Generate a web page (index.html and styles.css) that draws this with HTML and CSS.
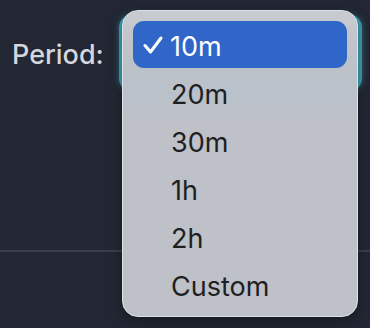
FILE: index.html
```html
<!DOCTYPE html>
<html>
<head>
<meta charset="utf-8">
<link rel="stylesheet" href="styles.css">
</head>
<body>
<div class="page">
  <div class="field">
    <span class="label">Period:</span>
    <div class="select">
      <ul class="menu">
        <li class="item selected"><svg class="check" width="20" height="18" viewBox="0 0 20 18"><polyline points="2,9.5 7.5,16 18,2" fill="none" stroke="#fff" stroke-width="3" stroke-linecap="round" stroke-linejoin="round"/></svg><span>10m</span></li>
        <li class="item"><span>20m</span></li>
        <li class="item"><span>30m</span></li>
        <li class="item"><span>1h</span></li>
        <li class="item"><span>2h</span></li>
        <li class="item"><span>Custom</span></li>
      </ul>
    </div>
  </div>
  <div class="divider"></div>
</div>
</body>
</html>
```

FILE: styles.css
```css
html, body {
  margin: 0;
  padding: 0;
  background: #222733;
}
.page {
  width: 370px;
  height: 328px;
  overflow: hidden;
  font-family: Inter, "Liberation Sans", sans-serif;
}
.field {
  display: flex;
  align-items: flex-start;
  padding: 14px 0 0 12px;
}
.label {
  width: 107px;
  margin-top: 26px;
  font-size: 27px;
  line-height: 30px;
  font-weight: 500;
  color: #d5d7dc;
}
.select {
  position: relative;
  width: 243px;
  height: 78px;
  border-radius: 14px;
  background: #3f9fb2;
  box-shadow: 0 0 6px rgba(80, 180, 200, 0.5);
}
.menu {
  position: absolute;
  left: 3px;
  top: -4px;
  width: 236px;
  height: 307px;
  box-sizing: border-box;
  margin: 0;
  padding: 10px 10px 0 10px;
  list-style: none;
  border-radius: 16px;
  background: linear-gradient(180deg, #c8cbd0 0px, #bfc2c8 40px, #b9c1ca 82px, #bec1c8 110px, #bec1c8 100%);
  border: 1px solid #dfe1e5;
  box-shadow: 0 4px 14px rgba(0, 0, 0, 0.35);
  z-index: 2;
}
.item {
  display: flex;
  align-items: center;
  height: 48px;
  box-sizing: border-box;
  padding: 3px 0 0 38px;
  font-size: 27px;
  color: #1e1f22;
  border-radius: 11px;
}
.item.selected {
  height: 47px;
  margin-bottom: 1px;
  padding-left: 10px;
  background: #2f66c7;
  color: #ffffff;
}
.check {
  margin-right: 7px;
  margin-top: -2px;
}
.divider {
  margin-top: 158px;
  height: 2px;
  background: #393e4a;
}
```
